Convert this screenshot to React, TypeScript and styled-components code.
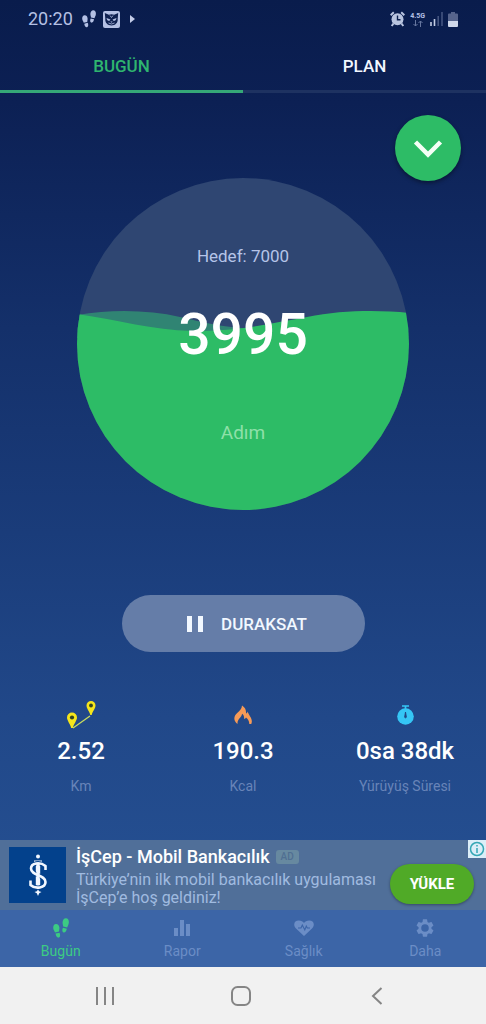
import React from "react";
import styled, { createGlobalStyle } from "styled-components";

const GlobalStyle = createGlobalStyle`
  * { box-sizing: border-box; }
  body { margin: 0; font-family: Roboto, "Liberation Sans", sans-serif; }
  button { font-family: inherit; border: 0; padding: 0; background: none; cursor: pointer; }
  svg { display: block; }
`;

const Screen = styled.div`
  display: flex;
  flex-direction: column;
  min-height: 100vh;
  background: linear-gradient(180deg, #091c4c 0%, #0c2054 10%, #14306a 32%, #1a3c7a 52%, #214889 70%, #244e90 84%);
  color: #fff;
`;

const StatusBar = styled.header`
  display: flex;
  align-items: center;
  justify-content: space-between;
  height: 38px;
  padding: 0 28px;
  color: #b4c0e4;
`;

const StatusGroup = styled.div<{ $gap: number }>`
  display: flex;
  align-items: center;
  gap: ${(p) => p.$gap}px;
`;

const Clock = styled.time`
  font-size: 18px;
  line-height: 24px;
`;

const Network = styled.div`
  display: flex;
  flex-direction: column;
  align-items: center;
  font-size: 7px;
  line-height: 8px;
  font-weight: 700;
`;

const Tabs = styled.nav`
  display: grid;
  grid-template-columns: 1fr 1fr;
`;

const Tab = styled.button<{ $active?: boolean }>`
  height: 55px;
  padding-top: 3px;
  border-bottom: 3px solid ${(p) => (p.$active ? "#35a877" : "#1e3261")};
  color: ${(p) => (p.$active ? "#2fb56f" : "#f2f7ff")};
  font-size: 17px;
  line-height: 20px;
  font-weight: 500;
`;

const Main = styled.main`
  flex: 1;
  display: flex;
  flex-direction: column;
  align-items: center;
`;

const ExpandButton = styled.button`
  display: grid;
  place-items: center;
  align-self: flex-end;
  width: 66px;
  height: 66px;
  margin: 22px 25px 0 0;
  border-radius: 50%;
  background: #2dbc66;
  box-shadow: 0 2px 4px rgba(0, 0, 0, 0.4);
`;

const Gauge = styled.section`
  display: grid;
  width: 332px;
  height: 332px;
  margin-top: -3px;
  border-radius: 50%;
  overflow: hidden;
  > * { grid-area: 1 / 1; }
`;

const GaugeText = styled.div`
  display: flex;
  flex-direction: column;
  align-items: center;
  padding-top: 67px;
  z-index: 1;
`;

const Goal = styled.span`
  color: #b5c4e8;
  font-size: 17px;
  line-height: 22px;
`;

const Steps = styled.strong`
  margin-top: 34px;
  font-size: 57px;
  line-height: 68px;
  font-weight: 500;
`;

const Unit = styled.span`
  margin-top: 52px;
  color: #8fe0a9;
  font-size: 19px;
  line-height: 24px;
`;

const PauseButton = styled.button`
  display: flex;
  align-items: center;
  justify-content: center;
  gap: 18px;
  width: 50%;
  height: 57px;
  margin-top: 85px;
  padding: 1px 0 0 8px;
  border-radius: 29px;
  background: #657da8;
  color: #f2f8ff;
  font-size: 17px;
  line-height: 20px;
  font-weight: 500;
`;

const Stats = styled.section`
  display: grid;
  grid-template-columns: repeat(3, 1fr);
  width: 100%;
  margin: 46px 0 43px;
`;

const Stat = styled.div`
  display: flex;
  flex-direction: column;
  align-items: center;
`;

const StatIcon = styled.div`
  display: grid;
  place-items: center;
  height: 34px;
`;

const StatValue = styled.strong`
  margin-top: 5px;
  font-size: 24px;
  line-height: 28px;
  font-weight: 500;
`;

const StatLabel = styled.span`
  margin-top: 12px;
  color: #6884b8;
  font-size: 14px;
  line-height: 18px;
`;

const Ad = styled.aside`
  position: relative;
  display: flex;
  align-items: flex-start;
  gap: 10px;
  height: 70px;
  padding: 7px 12px 7px 9px;
  background: #506f99;
`;

const AdLogo = styled.div`
  flex: none;
  display: grid;
  place-items: center;
  width: 57px;
  height: 56px;
  background: #03418c;
`;

const AdCopy = styled.div`
  flex: 1;
  min-width: 0;
  white-space: nowrap;
`;

const AdTitle = styled.h2`
  display: flex;
  align-items: center;
  gap: 6px;
  margin: 0;
  font-size: 18px;
  line-height: 20px;
  font-weight: 500;
`;

const AdTag = styled.span`
  padding: 0 5px;
  border-radius: 3px;
  background: #6789a0;
  color: #506f92;
  font-size: 10px;
  line-height: 14px;
`;

const AdText = styled.p`
  margin: 4px 0 0;
  color: #a0bbe0;
  font-size: 16px;
  line-height: 18px;
`;

const InstallButton = styled.button`
  flex: none;
  width: 84px;
  height: 40px;
  margin-top: 17px;
  border-radius: 20px;
  background: #50aa27;
  box-shadow: 0 1px 3px rgba(0, 0, 0, 0.35);
  color: #fff;
  font-size: 15px;
  font-weight: 700;
`;

const AdInfo = styled.button`
  position: absolute;
  top: 0;
  right: 0;
  display: grid;
  place-items: center;
  width: 18px;
  height: 18px;
  background: #dceef8;
`;

const BottomNav = styled.nav`
  display: grid;
  grid-template-columns: repeat(4, 1fr);
  height: 57px;
  background: #3c65a7;
`;

const NavItem = styled.button<{ $active?: boolean }>`
  display: flex;
  flex-direction: column;
  align-items: center;
  gap: 4px;
  padding-top: 8px;
  color: ${(p) => (p.$active ? "#3ccb83" : "#6b8dc6")};
  font-size: 14px;
  line-height: 18px;
`;

const NavIcon = styled.span`
  display: grid;
  place-items: center;
  height: 20px;
`;

const SystemBar = styled.footer`
  display: grid;
  grid-template-columns: 1fr 60px 1fr;
  align-items: center;
  height: 57px;
  background: #f1f1f1;
`;

const SystemButton = styled.button<{ $side?: "left" | "right" }>`
  display: grid;
  place-items: center;
  width: 60px;
  height: 48px;
  justify-self: ${(p) => (p.$side === "left" ? "end" : p.$side === "right" ? "start" : "center")};
  margin: ${(p) => (p.$side === "left" ? "0 78px 0 0" : p.$side === "right" ? "0 0 0 74px" : "0 4px 0 0")};
`;

const Footprints = ({ size }: { size: number }) => (
  <svg width={size} height={size * 1.25} viewBox="0 0 16 20" fill="currentColor" aria-hidden="true">
    <path d="M3 6C1 6-.1 8.200.3 10.600c.3 1.700 1.200 2.600 1.700 3.900l4-.9c-.1-1.200.6-2.300.4-4C6.100 7.300 4.900 5.900 3 6z" />
    <path d="M2.600 15.600l3.900-.9c1 2 .9 4.400-.7 4.900-1.600.4-2.900-1.300-3.200-4z" />
    <path d="M12.900.2c2.200 0 3.300 2.300 2.900 4.800-.3 1.900-1.200 3-1.600 4.500l-4-.9c0-1.400-.8-2.700-.6-4.500C9.900 1.800 11 .2 12.900.2z" />
    <path d="M9.900 9.800l3.900.9c-.4 2.500-1.700 4.100-3.300 3.700-1.500-.4-1.400-2.600-.6-4.600z" />
  </svg>
);

const CatBadge = () => (
  <svg width="17" height="17" viewBox="0 0 17 17" aria-hidden="true">
    <rect width="17" height="17" rx="2" fill="#b4c0e4" />
    <path d="M1.800 2l4 1.800a8 8 0 0 1 5.400 0l4-1.800-.5 5.800c.5 4-2.500 6.700-6.200 6.700S1.800 11.800 2.300 7.800z" fill="#0e2050" />
    <path d="M3.500 7l3.900 1.600c-.4 2-3.400 1.600-3.900-1.600zM13.500 7L9.600 8.600c.4 2 3.400 1.600 3.900-1.600zM7.300 10.500h2.400l-1.200 1.300z" fill="#b4c0e4" />
    <path d="M5.500 12q3 2 6 0M7 4.500l1.500 2L10 4.500" fill="none" stroke="#b4c0e4" strokeWidth=".8" />
  </svg>
);

const AlarmIcon = () => (
  <svg width="15" height="16" viewBox="0 0 15 16" aria-hidden="true">
    <circle cx="7.500" cy="8.200" r="6" fill="#b9c4df" />
    <path d="M.7 4.200L3.800 1.200M14.300 4.200l-3.100-3M3.500 12.500L1.700 15M11.500 12.500l1.800 2.500" stroke="#b9c4df" strokeWidth="2" />
    <path d="M7.500 4.500v4.200h3" fill="none" stroke="#0b1f4e" strokeWidth="1.400" />
  </svg>
);

const SignalIcon = () => (
  <svg width="13" height="14" viewBox="0 0 13 14" aria-hidden="true">
    <path d="M1 10v4M4.500 7v7" stroke="#c4cde4" strokeWidth="1.600" />
    <path d="M8.200 4v10M12 0v14" stroke="#4c5c87" strokeWidth="1.400" />
  </svg>
);

const BatteryIcon = () => (
  <svg width="10" height="15" viewBox="0 0 10 15" aria-hidden="true">
    <path d="M0 9V2.500Q0 1.500 1 1.500h2V0h4v1.500h2q1 0 1 1V9z" fill="#56648c" />
    <path d="M0 9h10v5q0 1-1 1H1q-1 0-1-1z" fill="#d0d8ea" />
  </svg>
);

const Wave = () => (
  <svg width="332" height="332" viewBox="0 0 332 332" aria-hidden="true">
    <rect width="332" height="332" fill="#2f4672" />
    <path d="M0 137C36 131 72 132 103 139C125 144 145 149 166 150L200 160H0z" fill="#308473" />
    <path d="M0 136C42 142 75 152 115 153C166 153 195 145 230 139C265 132 302 132 332 135V332H0z" fill="#2dbc66" />
  </svg>
);

const RouteIcon = () => (
  <svg width="31" height="30" viewBox="0 0 31 30" aria-hidden="true">
    <path d="M7 28L24 16" stroke="#c9dc5e" strokeWidth="1.300" />
    <path d="M6 12.500a5 5 0 0 1 5 5c0 3-3.200 6.500-4.200 10.500H5.200C4.200 24 1 20.500 1 17.500a5 5 0 0 1 5-5z" fill="#f5e51b" />
    <path d="M25 1a4.500 4.500 0 0 1 4.500 4.500c0 3-2.800 5.500-3.800 9.500h-1.400c-1-4-3.800-6.500-3.800-9.500A4.500 4.500 0 0 1 25 1z" fill="#f5e51b" />
    <circle cx="6" cy="17.500" r="2.100" fill="#33451f" />
    <circle cx="25" cy="5.500" r="1.900" fill="#33451f" />
  </svg>
);

const FlameIcon = () => (
  <svg width="18" height="20" viewBox="0 0 18 20" fill="#f69a57" aria-hidden="true">
    <path d="M3.500 19C-1 15.500-.3 11 3.200 8 6 5.600 7.800 3.800 8 .5c3.200 2 4.400 4.800 4 8.100 1-.3 1.400-1 1.600-2 1.400 4.400 5.800 7.500 3.700 12.300h-2c0-2.800-1.300-5-3.300-6.400-.4.900-1 1.300-1.900 1.400.2-2.400-.5-4.100-2-5.200C7.600 12.700 3.200 13.500 3.500 19z" />
  </svg>
);

const StopwatchIcon = () => (
  <svg width="17" height="20" viewBox="0 0 17 20" aria-hidden="true">
    <path d="M5 1h7M8.500 1v3" stroke="#35c6f5" strokeWidth="1.700" />
    <circle cx="8.500" cy="11.500" r="8.300" fill="#35c6f5" />
    <path d="M8.500 7l.8 5a.8.8 0 1 1-1.600 0z" fill="#204785" stroke="#204785" />
  </svg>
);

const BankLogo = () => (
  <svg width="22" height="44" viewBox="0 0 22 44" fill="#f2f7ff" aria-hidden="true">
    <circle cx="11" cy="3.500" r="2" />
    <path d="M7 7.500h8v1.500l-1.800.8v22.700l1.800.8V35H7v-1.700l1.800-.8V9.800L7 9z" />
    <path d="M18.500 17v-4C13 8.500 4 9.800 4 15.500c0 7.500 14.500 6 14.500 13.500C18.500 35 8.500 36.500 3.500 32v-4.500" fill="none" stroke="#03418c" strokeWidth="4.500" />
    <path d="M18.500 17v-4C13 8.500 4 9.800 4 15.500c0 7.500 14.500 6 14.500 13.500C18.500 35 8.500 36.500 3.500 32v-4.500" fill="none" stroke="#f2f7ff" strokeWidth="2.600" />
    <path d="M9.300 10h3.400v22H9.300z" />
    <path d="M11 36.500l1.200 1.800 2.300.7-2.300 1.200L11 43l-1.200-2.800L7.500 39l2.300-.7z" />
  </svg>
);

const BarsIcon = () => (
  <svg width="18" height="18" viewBox="0 0 18 18" fill="currentColor" aria-hidden="true">
    <path d="M1 9h4v8H1zM7 1h4v16H7zM13 5h4v12h-4z" />
  </svg>
);

const HeartIcon = () => (
  <svg width="20" height="18" viewBox="0 0 20 18" aria-hidden="true">
    <path d="M10 17L2 9.500C-1.500 5.500.5 1.500 4.800 1.500c2.400 0 4.200 1 5.200 2.500 1-1.500 2.800-2.500 5.200-2.500 4.300 0 6.300 4 2.800 8z" fill="currentColor" />
    <path d="M4 9h3l1.300-3 2.500 5L12.300 7l1 2H16" fill="none" stroke="#3c65a7" strokeWidth="1.100" />
  </svg>
);

const GearIcon = () => (
  <svg width="18" height="18" viewBox="2 2 20 20" fill="currentColor" aria-hidden="true">
    <path fillRule="evenodd" d="M19.140 12.940c.04-.3.060-.610.060-.940s-.02-.640-.07-.940l2.030-1.580c.18-.14.23-.41.12-.610l-1.920-3.320c-.12-.22-.37-.29-.59-.22l-2.390.96c-.5-.38-1.030-.7-1.620-.940l-.36-2.540A.48.48 0 0 0 13.920 2.400h-3.840c-.24 0-.43.17-.47.41l-.36 2.540c-.59.24-1.130.57-1.620.94l-2.390-.96c-.22-.08-.47 0-.59.22L2.740 8.870c-.12.21-.08.47.12.61l2.030 1.580c-.05.3-.09.63-.09.94s.02.64.07.94l-2.030 1.580c-.18.14-.23.41-.12.61l1.920 3.320c.12.22.37.29.59.22l2.390-.96c.5.38 1.030.7 1.620.94l.36 2.540c.05.24.24.41.48.41h3.840c.24 0 .44-.17.47-.41l.36-2.540c.59-.24 1.130-.56 1.620-.94l2.390.96c.22.08.47 0 .59-.22l1.920-3.320c.12-.22.07-.47-.12-.61zM12 16.200A4.200 4.200 0 1 1 12 7.800a4.200 4.200 0 0 1 0 8.400z" />
  </svg>
);

const stats = [
  { icon: <RouteIcon />, value: "2.52", label: "Km" },
  { icon: <FlameIcon />, value: "190.3", label: "Kcal" },
  { icon: <StopwatchIcon />, value: "0sa 38dk", label: "Yürüyüş Süresi" },
];

const navItems = [
  { icon: <Footprints size={16} />, label: "Bugün", active: true },
  { icon: <BarsIcon />, label: "Rapor" },
  { icon: <HeartIcon />, label: "Sağlık" },
  { icon: <GearIcon />, label: "Daha" },
];

export default function App() {
  return (
    <Screen lang="tr">
      <GlobalStyle />
      <StatusBar>
        <StatusGroup $gap={9}>
          <Clock>20:20</Clock>
          <StatusGroup $gap={7}>
            <Footprints size={14} />
            <CatBadge />
          </StatusGroup>
          <svg width="7" height="10" viewBox="0 0 7 10" aria-hidden="true">
            <path d="M1 1l5 4-5 4z" fill="#c4cde8" />
          </svg>
        </StatusGroup>
        <StatusGroup $gap={5}>
          <AlarmIcon />
          <Network>
            4.5G
            <svg width="10" height="7" viewBox="0 0 10 7" fill="none" stroke="#66769f" aria-hidden="true">
              <path d="M2.500 0v6M.5 4l2 2 2-2M7.500 7V1M5.500 3l2-2 2 2" />
            </svg>
          </Network>
          <SignalIcon />
          <BatteryIcon />
        </StatusGroup>
      </StatusBar>
      <Tabs>
        <Tab $active>BUGÜN</Tab>
        <Tab>PLAN</Tab>
      </Tabs>
      <Main>
        <ExpandButton aria-label="Göster">
          <svg width="30" height="20" viewBox="0 0 30 20" fill="none" stroke="#f4fff6" strokeWidth="4.500" aria-hidden="true">
            <path d="M2.500 4L15 16.500L27.500 4" />
          </svg>
        </ExpandButton>
        <Gauge>
          <Wave />
          <GaugeText>
            <Goal>Hedef: 7000</Goal>
            <Steps>3995</Steps>
            <Unit>Adım</Unit>
          </GaugeText>
        </Gauge>
        <PauseButton>
          <svg width="16" height="16" viewBox="0 0 16 16" fill="currentColor" aria-hidden="true">
            <path d="M0 0h5v16H0zM11 0h5v16h-5z" />
          </svg>
          DURAKSAT
        </PauseButton>
        <Stats>
          {stats.map((s) => (
            <Stat key={s.label}>
              <StatIcon>{s.icon}</StatIcon>
              <StatValue>{s.value}</StatValue>
              <StatLabel>{s.label}</StatLabel>
            </Stat>
          ))}
        </Stats>
      </Main>
      <Ad>
        <AdLogo><BankLogo /></AdLogo>
        <AdCopy>
          <AdTitle>İşCep - Mobil Bankacılık <AdTag>AD</AdTag></AdTitle>
          <AdText>Türkiye’nin ilk mobil bankacılık uygulaması<br />İşCep’e hoş geldiniz!</AdText>
        </AdCopy>
        <InstallButton>YÜKLE</InstallButton>
        <AdInfo aria-label="Reklam bilgisi">
          <svg width="16" height="16" viewBox="0 0 16 16" fill="none" stroke="#35a7b5" strokeWidth="1.500" aria-hidden="true">
            <circle cx="8" cy="8" r="6.500" />
            <path d="M8 7v5M8 4v1.600" />
          </svg>
        </AdInfo>
      </Ad>
      <BottomNav>
        {navItems.map((n) => (
          <NavItem key={n.label} $active={n.active}>
            <NavIcon>{n.icon}</NavIcon>
            {n.label}
          </NavItem>
        ))}
      </BottomNav>
      <SystemBar>
        <SystemButton $side="left" aria-label="Son uygulamalar">
          <svg width="18" height="18" viewBox="0 0 18 18" stroke="#858585" strokeWidth="2" aria-hidden="true">
            <path d="M1 0v18M9 0v18M17 0v18" />
          </svg>
        </SystemButton>
        <SystemButton aria-label="Ana ekran">
          <svg width="20" height="20" viewBox="0 0 20 20" fill="none" stroke="#858585" strokeWidth="2" aria-hidden="true">
            <rect x="1" y="1" width="18" height="18" rx="5.500" />
          </svg>
        </SystemButton>
        <SystemButton $side="right" aria-label="Geri">
          <svg width="12" height="18" viewBox="0 0 12 18" fill="none" stroke="#858585" strokeWidth="2" aria-hidden="true">
            <path d="M10.500 1L2 9l8.500 8" />
          </svg>
        </SystemButton>
      </SystemBar>
    </Screen>
  );
}
